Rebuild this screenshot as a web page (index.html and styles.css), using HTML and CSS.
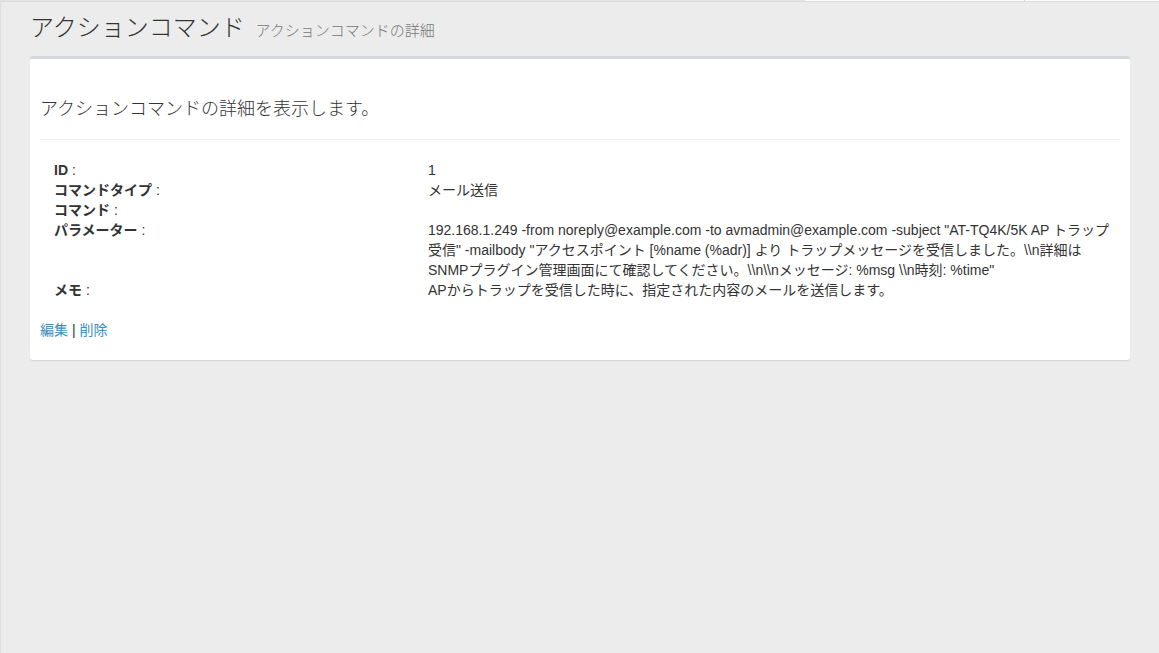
FILE: index.html
```html
<!DOCTYPE html>
<html lang="ja">
<head>
<meta charset="utf-8">
<title>アクションコマンド</title>
<link rel="stylesheet" href="styles.css">
</head>
<body>
<div class="topstrip">
  <div class="seg seg-a"></div>
  <div class="seg seg-b"></div>
  <div class="seg seg-c"></div>
</div>
<div class="wrapper">
  <section class="content-header">
    <h1>アクションコマンド <small>アクションコマンドの詳細</small></h1>
  </section>
  <section class="content">
    <div class="box">
      <div class="box-body">
        <p class="lead">アクションコマンドの詳細を表示します。</p>
        <hr class="sep">
        <dl class="details">
          <dt><b>ID</b> :</dt>
          <dd>1</dd>
          <dt><b>コマンドタイプ</b> :</dt>
          <dd>メール送信</dd>
          <dt><b>コマンド</b> :</dt>
          <dd></dd>
          <dt><b>パラメーター</b> :</dt>
          <dd>192.168.1.249 -from noreply@example.com -to avmadmin@example.com -subject "AT-TQ4K/5K AP トラップ受信" -mailbody "アクセスポイント [%name (%adr)] より トラップメッセージを受信しました。\\n詳細はSNMPプラグイン管理画面にて確認してください。\\n\\nメッセージ: %msg \\n時刻: %time"</dd>
          <dt><b>メモ</b> :</dt>
          <dd>APからトラップを受信した時に、指定された内容のメールを送信します。</dd>
        </dl>
        <p class="actions"><a href="#">編集</a> | <a href="#">削除</a></p>
      </div>
    </div>
  </section>
</div>
</body>
</html>
```
FILE: styles.css
```css
html, body {
  margin: 0;
  padding: 0;
  height: 100%;
}
body {
  background: #ececec;
  font-family: "Liberation Sans", Arial, "Noto Sans CJK JP", sans-serif;
  font-size: 14px;
  line-height: 20px;
  color: #333;
}
.topstrip {
  display: flex;
  height: 1px;
  border-bottom: 1px solid #dcdcdc;
}
.seg-a {
  width: 805px;
  background: #e3e3e3;
}
.seg-b {
  width: 219px;
  background: #fbfbfb;
  border-right: 1px solid #d6d6d6;
}
.seg-c {
  flex: 1;
  background: #fbfbfb;
}
.wrapper {
  border-left: 1px solid #dedede;
  min-height: calc(100% - 2px);
  box-sizing: border-box;
  padding: 0 29px;
}
.content-header {
  padding-top: 13px;
}
.content-header h1 {
  margin: 0;
  font-size: 24px;
  font-weight: 300;
  line-height: 26px;
  height: 26px;
  color: #333;
}
.content-header h1 small {
  font-size: 15px;
  line-height: 1;
  color: #777;
  padding-left: 4px;
}
.content {
  padding-top: 15px;
}
.box {
  background: #fff;
  border-top: 3px solid #d2d6de;
  border-radius: 3px;
  box-shadow: 0 1px 1px rgba(0, 0, 0, 0.1);
}
.box-body {
  padding: 10px;
}
.lead {
  margin: 28px 0 0;
  font-size: 18px;
  line-height: 25px;
  font-weight: 300;
}
.sep {
  margin: 17px 0 20px;
  border: 0;
  border-top: 1px solid #eee;
}
.details {
  margin: 0 0 20px;
  display: grid;
  grid-template-columns: 374px 1fr;
  padding-left: 14px;
  padding-right: 6px;
}
.details dt {
  font-weight: 400;
}
.details dt b {
  font-weight: 700;
}
.details dd {
  margin: 0;
  min-height: 20px;
}
.actions {
  margin: 0 0 10px;
}
.actions a {
  color: #3c8dbc;
  text-decoration: none;
}
```
